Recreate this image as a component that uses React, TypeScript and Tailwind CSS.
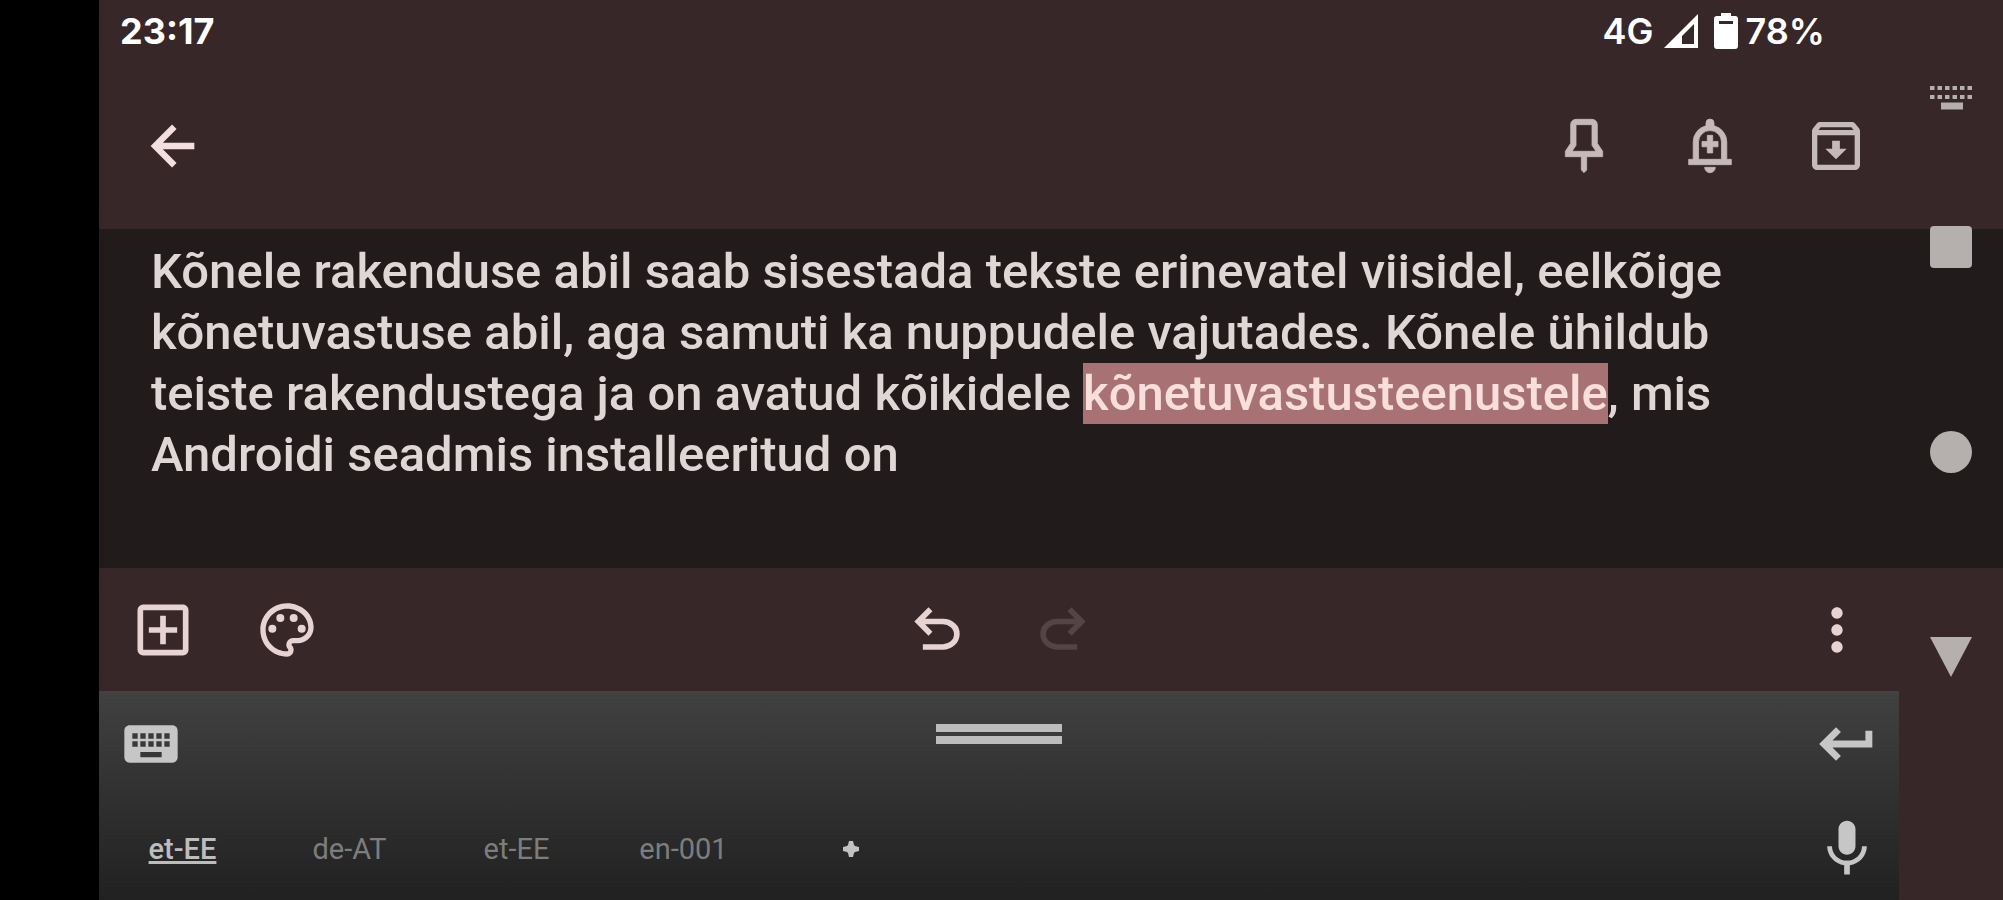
import type { ReactNode } from "react";
import {
  MdKeyboard,
  MdMic,
  MdMoreVert,
  MdOutlineAddBox,
  MdOutlineArchive,
  MdOutlinePalette,
} from "react-icons/md";

const languages = ["et-EE", "de-AT", "et-EE", "en-001"];

const undoPath =
  "M280-200v-80h284q63 0 109.5-40T720-420q0-60-46.5-100T564-560H312l104 104-56 56-200-200 200-200 56 56-104 104h252q97 0 169.5 63T800-420q0 94-72.5 157T564-200H280Z";

function IconButton({ label, className = "", disabled = false, children }: {
  label: string;
  className?: string;
  disabled?: boolean;
  children?: ReactNode;
}) {
  return (
    <button type="button" aria-label={label} disabled={disabled} className={`shrink-0 ${className}`}>
      {children}
    </button>
  );
}

function BackIcon() {
  return (
    <svg viewBox="0 0 24 24" fill="none" stroke="currentColor" strokeWidth="2.4" className="size-16">
      <path d="M20 12H6M12.500 4.800 5.300 12l7.200 7.200" />
    </svg>
  );
}

function EnterIcon() {
  return (
    <svg viewBox="0 0 24 24" fill="none" stroke="currentColor" strokeWidth="2.6" className="size-16">
      <path d="M20.200 7v5H5M8.800 6.600 3.400 12l5.400 5.400" />
    </svg>
  );
}

function PinIcon() {
  return (
    <svg viewBox="0 0 24 24" fill="currentColor" stroke="currentColor" strokeWidth="0.3" className="size-16">
      <path
        fillRule="evenodd"
        d="M17 4v7l2 3v2h-6v5l-1 1-1-1v-5H5v-2l2-3V4c0-1.1.9-2 2-2h6c1.1 0 2 .9 2 2zM9 4v7.75L7.5 14h9L15 11.75V4H9z"
      />
    </svg>
  );
}

function ReminderIcon() {
  return (
    <svg viewBox="0 0 24 24" fill="currentColor" stroke="currentColor" strokeWidth="0.3" className="size-16">
      <path
        fillRule="evenodd"
        d="M4 19v-2h1.7v-6.5a6.3 6.3 0 0 1 4.8-6.1V3.4a1.5 1.5 0 0 1 3 0v1a6.3 6.3 0 0 1 4.8 6.1V17H20v2H4zm3.7-2h8.6v-6.5a4.3 4.3 0 0 0-8.6 0V17z"
      />
      <path d="M10 20h4a2 2 0 0 1-4 0zM11 8h2v2.3h2v2h-2v2.3h-2v-2.3H9v-2h2z" />
    </svg>
  );
}

function StatusBar() {
  return (
    <div className="flex h-[62px] items-center justify-between pl-[21px] pr-[74px] font-['Inter',sans-serif] text-[36px] leading-none text-white">
      <span className="font-bold">23:17</span>
      <div className="flex items-center font-semibold">
        <span>4G</span>
        <svg viewBox="0 0 34 34" className="ml-[10px] size-[34px]" fill="currentColor">
          <path fillRule="evenodd" d="M34 0v34H0zM30 10 18 22v8h12z" />
        </svg>
        <svg viewBox="0 0 24 36" className="ml-4 h-9 w-6" fill="currentColor">
          <path
            fillRule="evenodd"
            d="M7 0h10v3h4a3 3 0 0 1 3 3v27a3 3 0 0 1-3 3H3a3 3 0 0 1-3-3V6a3 3 0 0 1 3-3h4zM5 8v3h14V8z"
          />
        </svg>
        <span className="ml-2">78%</span>
      </div>
    </div>
  );
}

function NoteHeader() {
  return (
    <header>
      <StatusBar />
      <div className="flex h-[167px] items-start justify-between pl-[42px] pr-[31px] pt-[52px]">
        <IconButton label="Back" className="text-[#f3dfdf]">
          <BackIcon />
        </IconButton>
        <div className="flex gap-[62px] text-[#c5b9b9]">
          <IconButton label="Pin">
            <PinIcon />
          </IconButton>
          <IconButton label="Reminder">
            <ReminderIcon />
          </IconButton>
          <IconButton label="Archive">
            <MdOutlineArchive className="size-16" />
          </IconButton>
        </div>
      </div>
    </header>
  );
}

function NoteBody() {
  return (
    <main className="pl-[52px] pt-3 text-[#dfd7d6]">
      <div
        role="textbox"
        aria-label="Note"
        contentEditable
        suppressContentEditableWarning
        spellCheck={false}
        className="whitespace-nowrap text-[49px] font-medium leading-[61px] outline-none"
      >
        <p>Kõnele rakenduse abil saab sisestada tekste erinevatel viisidel, eelkõige</p>
        <p>kõnetuvastuse abil, aga samuti ka nuppudele vajutades. Kõnele ühildub</p>
        <p>
          teiste rakendustega ja on avatud kõikidele{" "}
          <mark className="inline-block bg-[#a87274] text-[#f8dfdc]">kõnetuvastusteenustele</mark>, mis
        </p>
        <p>Androidi seadmis installeeritud on</p>
      </div>
    </main>
  );
}

function NoteToolbar() {
  return (
    <div className="grid h-[123px] grid-cols-3 items-center pl-[30px] pr-7 text-[#e8d3d3]">
      <div className="flex items-center gap-[58px]">
        <IconButton label="Add">
          <MdOutlineAddBox className="size-[68px]" />
        </IconButton>
        <IconButton label="Background">
          <MdOutlinePalette className="size-16" />
        </IconButton>
      </div>
      <div className="flex justify-center gap-[58px]">
        <IconButton label="Undo">
          <svg viewBox="0 -960 960 960" fill="currentColor" className="size-[68px]">
            <path d={undoPath} />
          </svg>
        </IconButton>
        <IconButton label="Redo" disabled className="text-[#554446]">
          <svg viewBox="0 -960 960 960" fill="currentColor" className="size-[68px]">
            <path d={undoPath} transform="matrix(-1 0 0 1 960 0)" />
          </svg>
        </IconButton>
      </div>
      <div className="flex justify-end">
        <IconButton label="More">
          <MdMoreVert className="size-[68px]" />
        </IconButton>
      </div>
    </div>
  );
}

function VoiceKeyboard() {
  return (
    <section className="h-[209px] bg-linear-to-b from-[#414141] to-[#212121] text-[#c6c6c6]">
      <div className="grid h-[106px] grid-cols-3 items-center px-5">
        <IconButton label="Switch keyboard" className="justify-self-start">
          <MdKeyboard className="size-16" />
        </IconButton>
        <button type="button" aria-label="Resize" className="flex flex-col gap-1 justify-self-center pb-5">
          <span className="h-2 w-[126px] bg-[#bcbcbc]" />
          <span className="h-2 w-[126px] bg-[#bcbcbc]" />
        </button>
        <IconButton label="Enter" className="justify-self-end">
          <EnterIcon />
        </IconButton>
      </div>
      <div className="flex h-[103px] items-center justify-between pr-[18px]">
        <div className="flex text-[29px] leading-8 text-[#7d7d7d]">
          {languages.map((lang, i) => (
            <button
              key={i}
              type="button"
              className={i === 0 ? "w-[167px] text-[#bdbdbd] font-medium underline decoration-3 underline-offset-2" : "w-[167px]"}
            >
              {lang}
            </button>
          ))}
          <button type="button" aria-label="Add language" className="flex w-[167px] items-center justify-center">
            <svg viewBox="0 0 18 18" className="size-[18px] text-[#c2c2c2]" fill="currentColor">
              <path d="M7 1h4l1 4 1 1 4 1v4l-4 1-1 1-1 4H7l-1-4-1-1-4-1V7l4-1 1-1z" />
            </svg>
          </button>
        </div>
        <IconButton label="Speak">
          <MdMic className="size-[68px]" />
        </IconButton>
      </div>
    </section>
  );
}

function SystemNav() {
  return (
    <nav className="z-10 col-start-2 row-start-1 flex flex-col items-center pt-[76px] text-[#b5afad]">
      <IconButton label="Choose input method" className="mb-[108px]">
        <svg viewBox="0 0 42 42" className="size-[42px]" fill="none" stroke="currentColor">
          <path d="M0 12h42M0 21h42" strokeWidth="4" strokeDasharray="4.500 3" />
          <path d="M11 30h22" strokeWidth="7" />
        </svg>
      </IconButton>
      <div className="flex flex-col gap-[163px]">
        <IconButton label="Recent apps" className="size-[42px] rounded-sm bg-[#b5afad]" />
        <IconButton label="Home" className="size-[42px] rounded-full bg-[#b5afad]" />
        <IconButton label="Hide keyboard">
          <svg viewBox="0 0 42 42" className="size-[42px]" fill="currentColor">
            <path d="M0 1h42L21 41z" />
          </svg>
        </IconButton>
      </div>
    </nav>
  );
}

export default function App() {
  return (
    <div className="flex min-h-screen bg-black font-['Roboto',sans-serif]">
      <div className="ml-[99px] grid flex-1 grid-cols-[minmax(0,1fr)_104px] bg-[#211b1b]">
        <div className="col-start-1 col-end-3 row-start-1 grid grid-rows-[auto_1fr_auto]">
          <div className="bg-[#372729] pr-[104px]">
            <NoteHeader />
          </div>
          <NoteBody />
          <div className="bg-[#372729] pr-[104px]">
            <NoteToolbar />
            <VoiceKeyboard />
          </div>
        </div>
        <SystemNav />
      </div>
    </div>
  );
}
